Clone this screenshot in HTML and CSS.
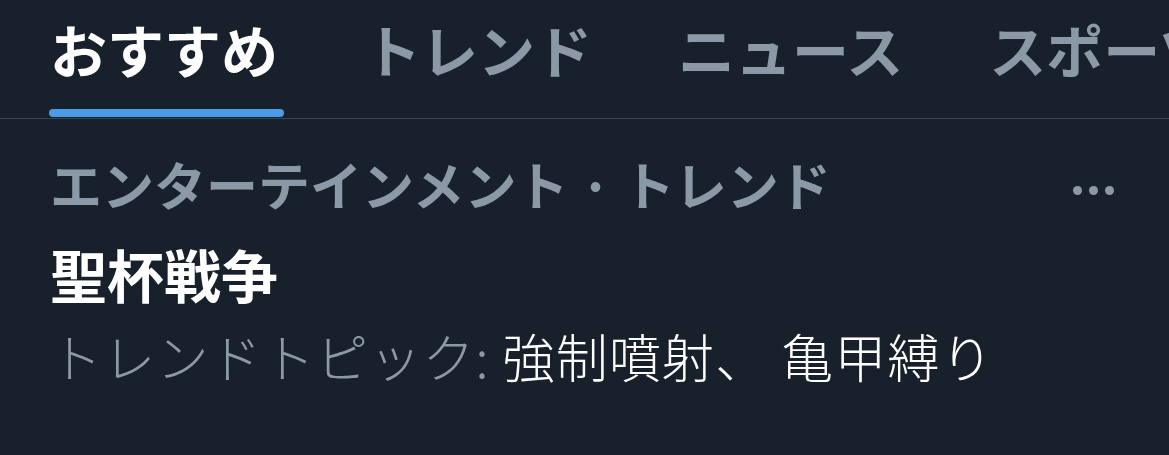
FILE: index.html
```html
<!DOCTYPE html>
<html lang="ja">
<head>
    <meta charset="UTF-8">
    <meta name="viewport" content="width=device-width, initial-scale=1.0">
    <title>おすすめ</title>
    <link rel="stylesheet" href="styles.css">
</head>
<body>
    <nav class="tabs">
        <a class="tab active" href="#">おすすめ</a>
        <a class="tab" href="#">トレンド</a>
        <a class="tab" href="#">ニュース</a>
        <a class="tab" href="#">スポーツ</a>
    </nav>

    <section class="trend">
        <div class="trend-head">
            <span class="trend-meta">エンターテインメント · トレンド</span>
            <button class="more" aria-label="その他">
                <span class="dot"></span><span class="dot"></span><span class="dot"></span>
            </button>
        </div>
        <div class="trend-title">聖杯戦争</div>
        <div class="trend-topics"><span class="label">トレンドトピック:</span> 強制噴射、 亀甲縛り</div>
    </section>
</body>
</html>
```

FILE: styles.css
```css
body {
    margin: 0;
    background: #18202b;
    font-family: "Noto Sans CJK JP", "Noto Sans", sans-serif;
    color: #fff;
    height: 100vh;
    overflow: hidden;
}
.tabs {
    display: flex;
    gap: 86px;
    padding: 20px 0 1px 50px;
    border-bottom: 1px solid #3b4450;
    white-space: nowrap;
    overflow: hidden;
}
.tab {
    display: flex;
    flex-direction: column;
    flex-shrink: 0;
    font-size: 57px;
    line-height: 57px;
    font-weight: 700;
    color: #8b98a5;
    text-decoration: none;
}
.tab::after {
    content: "";
    display: block;
    height: 8px;
    margin-top: 32px;
    border-radius: 4px;
}
.tab.active {
    color: #fff;
}
.tab.active::after {
    background: #4a9be8;
    margin-left: -1px;
    margin-right: -6px;
}
.trend {
    padding: 39px 55px 0 50px;
}
.trend-head {
    display: flex;
    justify-content: space-between;
    align-items: center;
}
.trend-meta {
    font-size: 52px;
    line-height: 52px;
    font-weight: 700;
    color: #8b98a5;
}
.more {
    display: flex;
    gap: 7px;
    padding: 0;
    margin-top: 12px;
    border: none;
    background: none;
    cursor: pointer;
}
.dot {
    width: 9px;
    height: 9px;
    border-radius: 50%;
    background: #8b98a5;
}
.trend-title {
    margin-top: 35px;
    font-size: 57px;
    line-height: 57px;
    font-weight: 700;
}
.trend-topics {
    margin-top: 28px;
    font-size: 52px;
    line-height: 52px;
    letter-spacing: 1.2px;
    font-weight: 300;
    color: #fff;
}
.trend-topics .label {
    color: #8b98a5;
}
```
